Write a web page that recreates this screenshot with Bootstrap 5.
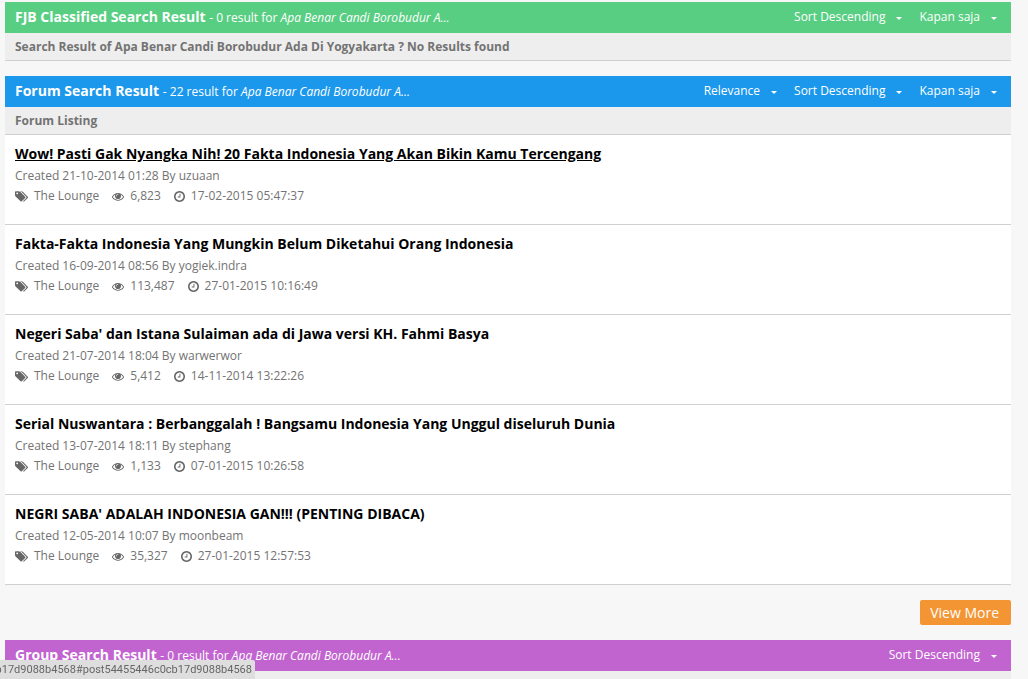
<!DOCTYPE html>
<html lang="id">
<head>
<meta charset="utf-8">
<meta name="viewport" content="width=device-width, initial-scale=1">
<title>Search Result</title>
<link href="https://cdn.jsdelivr.net/npm/bootstrap@5.3.0/dist/css/bootstrap.min.css" rel="stylesheet">
<style>
  body { font-family: "Open Sans", sans-serif; font-size: 12px; line-height: 20px; color: #737373; background: #f7f7f7; overflow: hidden; }
  .results { padding: 2px 17px 0 5px; }
  .forum, .view-more { margin: 15px 0; }
  .result-head { height: 31px; padding: 0 10px; color: #fff; }
  .result-head h2 { font-size: 14px; line-height: 30px; font-weight: 700; }
  .result-head h2 small { font-size: 12px; font-weight: 400; }
  .head-fjb { background: #58ce82; }
  .head-forum { background: #1b97ec; }
  .head-group { background: #c164d0; }
  .filters { gap: 13px; }
  .filter { font-size: 12px; line-height: 28px; height: 29px; color: #fff; background: none; border: 0; padding: 0 4px 0 0; }
  .filter::after { border-width: 3px 3px 0; margin-left: 11px; vertical-align: 1px; }
  .result-sub { height: 28px; padding: 0 10px; margin: 0; font-size: 12px; line-height: 27px; font-weight: 700; background: #eee; border-bottom: 1px solid #d0d0d0; }
  .result-item { height: 90px; padding: 9px 10px 0; background: #fff; border-bottom: 1px solid #d0d0d0; }
  .result-item h3 { font-size: 14px; line-height: 20px; font-weight: 700; margin-bottom: 2px; }
  .result-item h3 a { color: #000; text-decoration: none; }
  .result-item h3 a:hover, .result-item h3 a.hovered { text-decoration: underline; }
  .stats { gap: 13px; }
  .stats svg { height: 13px; fill: #666; margin-right: 6px; }
  .more { font-size: 14px; line-height: 25px; padding: 0 12px 0 10px; color: #fff; background: #f49534; border: 0; border-radius: 2px; }
  .status-url { font-family: Roboto, sans-serif; font-size: 11px; line-height: 19px; width: 255px; height: 19px; padding-right: 3px; color: #666; background: #dedede; border-top-right-radius: 2px; white-space: nowrap; overflow: hidden; }
</style>
</head>
<body>
<svg class="d-none" aria-hidden="true">
  <symbol id="tags" viewBox="0 0 1899 1792"><path d="M448 448q0-53-37.500-90.500t-90.500-37.500-90.500 37.500-37.500 90.500 37.500 90.500 90.500 37.500 90.500-37.500 37.500-90.500zm1067 576q0 53-37 90l-491 492q-39 37-91 37-53 0-90-37l-715-716q-38-37-64.500-101t-26.500-117v-416q0-52 38-90t90-38h416q53 0 117 26.500t102 64.500l715 714q37 39 37 91zm384 0q0 53-37 90l-491 492q-39 37-91 37-36 0-59-14t-53-45l470-470q37-37 37-90 0-52-37-91l-715-714q-38-38-102-64.500t-117-26.500h224q53 0 117 26.500t102 64.500l715 714q37 39 37 91z"/></symbol>
  <symbol id="eye" viewBox="0 0 1792 1792"><path d="M1664 960q-152-236-381-353 61 104 61 225 0 185-131.500 316.500t-316.500 131.500-316.500-131.500-131.500-316.500q0-121 61-225-229 117-381 353 133 205 333.500 326.500t434.500 121.500 434.500-121.500 333.500-326.500zm-720-384q0-20-14-34t-34-14q-125 0-214.500 89.500t-89.500 214.500q0 20 14 34t34 14 34-14 14-34q0-86 61-147t147-61q20 0 34-14t14-34zm848 384q0 34-20 69-140 230-376.500 368.500t-499.500 138.500-499.500-139-376.500-368q-20-35-20-69t20-69q140-229 376.500-368t499.500-139 499.500 139 376.500 368q20 35 20 69z"/></symbol>
  <symbol id="clock" viewBox="128 0 1536 1792"><path d="M1024 544v448q0 14-9 23t-23 9h-320q-14 0-23-9t-9-23v-64q0-14 9-23t23-9h224v-352q0-14 9-23t23-9h64q14 0 23 9t9 23zm416 352q0-148-73-273t-198-198-273-73-273 73-198 198-73 273 73 273 198 198 273 73 273-73 198-198 73-273zm224 0q0 209-103 385.500t-279.500 279.500-385.500 103-385.500-103-279.500-279.500-103-385.500 103-385.500 279.500-279.500 385.500-103 385.500 103 279.500 279.500 103 385.500z"/></symbol>
</svg>

<main class="results">
  <section>
    <header class="result-head head-fjb d-flex justify-content-between">
      <h2 class="m-0">FJB Classified Search Result <small>- 0 result for <em>Apa Benar Candi Borobudur A...</em></small></h2>
      <div class="filters d-flex">
        <button type="button" class="filter dropdown-toggle">Sort Descending</button>
        <button type="button" class="filter dropdown-toggle">Kapan saja</button>
      </div>
    </header>
    <p class="result-sub">Search Result of Apa Benar Candi Borobudur Ada Di Yogyakarta ? No Results found</p>
  </section>

  <section class="forum">
    <header class="result-head head-forum d-flex justify-content-between">
      <h2 class="m-0">Forum Search Result <small>- 22 result for <em>Apa Benar Candi Borobudur A...</em></small></h2>
      <div class="filters d-flex">
        <button type="button" class="filter dropdown-toggle">Relevance</button>
        <button type="button" class="filter dropdown-toggle">Sort Descending</button>
        <button type="button" class="filter dropdown-toggle">Kapan saja</button>
      </div>
    </header>
    <p class="result-sub">Forum Listing</p>

    <article class="result-item">
      <h3><a href="#" class="hovered">Wow! Pasti Gak Nyangka Nih! 20 Fakta Indonesia Yang Akan Bikin Kamu Tercengang</a></h3>
      <div>Created 21-10-2014 01:28 By uzuaan</div>
      <div class="stats d-flex">
        <span class="d-flex align-items-center"><svg width="13"><use href="#tags"/></svg>The Lounge</span>
        <span class="d-flex align-items-center"><svg width="12"><use href="#eye"/></svg>6,823</span>
        <span class="d-flex align-items-center"><svg width="11"><use href="#clock"/></svg>17-02-2015 05:47:37</span>
      </div>
    </article>
    <article class="result-item">
      <h3><a href="#">Fakta-Fakta Indonesia Yang Mungkin Belum Diketahui Orang Indonesia</a></h3>
      <div>Created 16-09-2014 08:56 By yogiek.indra</div>
      <div class="stats d-flex">
        <span class="d-flex align-items-center"><svg width="13"><use href="#tags"/></svg>The Lounge</span>
        <span class="d-flex align-items-center"><svg width="12"><use href="#eye"/></svg>113,487</span>
        <span class="d-flex align-items-center"><svg width="11"><use href="#clock"/></svg>27-01-2015 10:16:49</span>
      </div>
    </article>
    <article class="result-item">
      <h3><a href="#">Negeri Saba' dan Istana Sulaiman ada di Jawa versi KH. Fahmi Basya</a></h3>
      <div>Created 21-07-2014 18:04 By warwerwor</div>
      <div class="stats d-flex">
        <span class="d-flex align-items-center"><svg width="13"><use href="#tags"/></svg>The Lounge</span>
        <span class="d-flex align-items-center"><svg width="12"><use href="#eye"/></svg>5,412</span>
        <span class="d-flex align-items-center"><svg width="11"><use href="#clock"/></svg>14-11-2014 13:22:26</span>
      </div>
    </article>
    <article class="result-item">
      <h3><a href="#">Serial Nuswantara : Berbanggalah ! Bangsamu Indonesia Yang Unggul diseluruh Dunia</a></h3>
      <div>Created 13-07-2014 18:11 By stephang</div>
      <div class="stats d-flex">
        <span class="d-flex align-items-center"><svg width="13"><use href="#tags"/></svg>The Lounge</span>
        <span class="d-flex align-items-center"><svg width="12"><use href="#eye"/></svg>1,133</span>
        <span class="d-flex align-items-center"><svg width="11"><use href="#clock"/></svg>07-01-2015 10:26:58</span>
      </div>
    </article>
    <article class="result-item">
      <h3><a href="#">NEGRI SABA' ADALAH INDONESIA GAN!!! (PENTING DIBACA)</a></h3>
      <div>Created 12-05-2014 10:07 By moonbeam</div>
      <div class="stats d-flex">
        <span class="d-flex align-items-center"><svg width="13"><use href="#tags"/></svg>The Lounge</span>
        <span class="d-flex align-items-center"><svg width="12"><use href="#eye"/></svg>35,327</span>
        <span class="d-flex align-items-center"><svg width="11"><use href="#clock"/></svg>27-01-2015 12:57:53</span>
      </div>
    </article>
    <div class="view-more d-flex justify-content-end"><button type="button" class="more">View More</button></div>
  </section>

  <section>
    <header class="result-head head-group d-flex justify-content-between">
      <h2 class="m-0">Group Search Result <small>- 0 result for <em>Apa Benar Candi Borobudur A...</em></small></h2>
      <div class="filters d-flex">
        <button type="button" class="filter dropdown-toggle">Sort Descending</button>
      </div>
    </header>
    <p class="result-sub"></p>
  </section>
</main>
<div class="status-url d-flex justify-content-end position-fixed bottom-0 start-0"><span>b17d9088b4568#post54455446c0cb17d9088b4568</span></div>
<script src="https://cdn.jsdelivr.net/npm/bootstrap@5.3.0/dist/js/bootstrap.bundle.min.js"></script>
</body>
</html>
